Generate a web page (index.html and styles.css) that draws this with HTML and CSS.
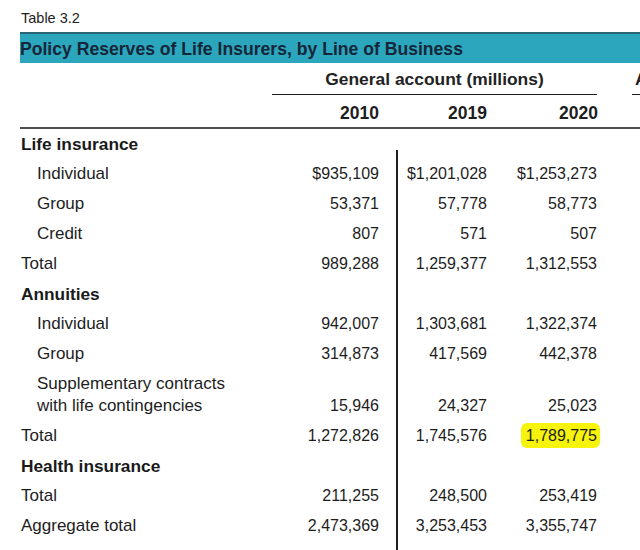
FILE: index.html
```html
<!DOCTYPE html>
<html lang="en">
<head>
<meta charset="utf-8">
<title>Table 3.2</title>
<link rel="stylesheet" href="styles.css">
</head>
<body>
<div class="page">
  <div class="caption">Table 3.2</div>
  <div class="titlebar">Policy Reserves of Life Insurers, by Line of Business</div>
  <table class="data">
    <colgroup>
      <col class="c-label"><col class="c-num1"><col class="c-num2"><col class="c-num3"><col class="c-next">
    </colgroup>
    <thead>
      <tr class="group-row">
        <th></th>
        <th colspan="3"><div class="group">General account (millions)</div></th>
        <th><div class="group next-group">All accounts (millions)</div></th>
      </tr>
      <tr class="year-row">
        <th></th><th class="num">2010</th><th class="num split">2019</th><th class="num">2020</th><th></th>
      </tr>
    </thead>
    <tbody>
      <tr class="section first"><td>Life insurance</td><td></td><td class="split start"></td><td></td><td></td></tr>
      <tr><td class="sub">Individual</td><td class="num">$935,109</td><td class="num split">$1,201,028</td><td class="num">$1,253,273</td><td></td></tr>
      <tr><td class="sub">Group</td><td class="num">53,371</td><td class="num split">57,778</td><td class="num">58,773</td><td></td></tr>
      <tr><td class="sub">Credit</td><td class="num">807</td><td class="num split">571</td><td class="num">507</td><td></td></tr>
      <tr><td>Total</td><td class="num">989,288</td><td class="num split">1,259,377</td><td class="num">1,312,553</td><td></td></tr>
      <tr class="section"><td>Annuities</td><td></td><td class="split"></td><td></td><td></td></tr>
      <tr><td class="sub">Individual</td><td class="num">942,007</td><td class="num split">1,303,681</td><td class="num">1,322,374</td><td></td></tr>
      <tr><td class="sub">Group</td><td class="num">314,873</td><td class="num split">417,569</td><td class="num">442,378</td><td></td></tr>
      <tr class="two-line"><td class="sub">Supplementary contracts<br>with life contingencies</td><td class="num">15,946</td><td class="num split">24,327</td><td class="num">25,023</td><td></td></tr>
      <tr><td>Total</td><td class="num">1,272,826</td><td class="num split">1,745,576</td><td class="num"><span class="mark">1,789,775</span></td><td></td></tr>
      <tr class="section"><td>Health insurance</td><td></td><td class="split"></td><td></td><td></td></tr>
      <tr><td>Total</td><td class="num">211,255</td><td class="num split">248,500</td><td class="num">253,419</td><td></td></tr>
      <tr><td>Aggregate total</td><td class="num">2,473,369</td><td class="num split">3,253,453</td><td class="num">3,355,747</td><td></td></tr>
      <tr class="tail"><td></td><td></td><td class="split"></td><td></td><td></td></tr>
    </tbody>
  </table>
</div>
</body>
</html>
```
FILE: styles.css
```css
html, body {
  margin: 0;
  padding: 0;
  background: #ffffff;
  overflow: hidden;
}

body {
  width: 640px;
  height: 550px;
  font-family: "Liberation Sans", Arial, sans-serif;
  color: #1d1d1d;
}

.page {
  width: 900px;
  padding-left: 20px;
}

.caption {
  margin-top: 8px;
  margin-bottom: 4px;
  padding-left: 1px;
  font-size: 14.5px;
  line-height: 20px;
  color: #222;
}

.titlebar {
  border-top: 2px solid #2d6475;
  background: #2ca6bc;
  height: 29px;
  line-height: 30px;
  font-size: 17.6px;
  font-weight: bold;
  color: #15263a;
  white-space: nowrap;
}

.data {
  border-collapse: separate;
  border-spacing: 0;
  table-layout: fixed;
  width: 876px;
}

.c-label { width: 252px; }
.c-num1 { width: 124px; }
.c-num2 { width: 109px; }
.c-num3 { width: 110px; }
.c-next { width: 281px; }

.data th,
.data td {
  padding: 0;
  white-space: nowrap;
}

.group-row th {
  height: 32px;
  vertical-align: top;
}

.group {
  height: 31px;
  line-height: 32px;
  border-bottom: 1px solid #1e1e1e;
  margin-right: 18px;
  text-align: center;
  font-size: 17.4px;
  font-weight: bold;
  color: #222;
}

.next-group {
  margin-left: 17px;
  margin-right: 0;
  padding-left: 3px;
  text-align: left;
}

.year-row th {
  height: 28px;
  padding-top: 4px;
  line-height: 28px;
  font-size: 17.5px;
  font-weight: bold;
  color: #1d1d1d;
  border-bottom: 2px solid #505050;
  vertical-align: top;
}

.data .num {
  text-align: right;
  padding-right: 17px;
}

.data .num.split,
.data td.split ~ .num {
  padding-right: 18px;
}

.data tbody td {
  height: 30px;
  line-height: 30px;
  font-size: 17px;
  vertical-align: middle;
}

.data tbody td:first-child {
  padding-left: 1px;
}

.data tbody td.num {
  font-size: 16px;
}

.data tbody td.split {
  background: linear-gradient(#1e1e1e, #1e1e1e) left top / 2px 100% no-repeat;
}

.data tbody td.split.start {
  background: linear-gradient(#1e1e1e, #1e1e1e) left bottom / 2px 9px no-repeat;
}

.data tbody .section td {
  font-size: 17.3px;
  font-weight: bold;
  color: #1a1a1a;
}

.data tbody td.sub {
  padding-left: 17px;
}

.data tbody .two-line td {
  height: 44px;
  padding-top: 4px;
  padding-bottom: 4px;
  line-height: 22px;
  vertical-align: bottom;
}

.mark {
  padding: 4px 3px 4px 5px;
  margin-right: -3px;
  background: #f6f40c;
  border-radius: 6px;
}

.data tbody .tail td {
  height: 40px;
}
```
